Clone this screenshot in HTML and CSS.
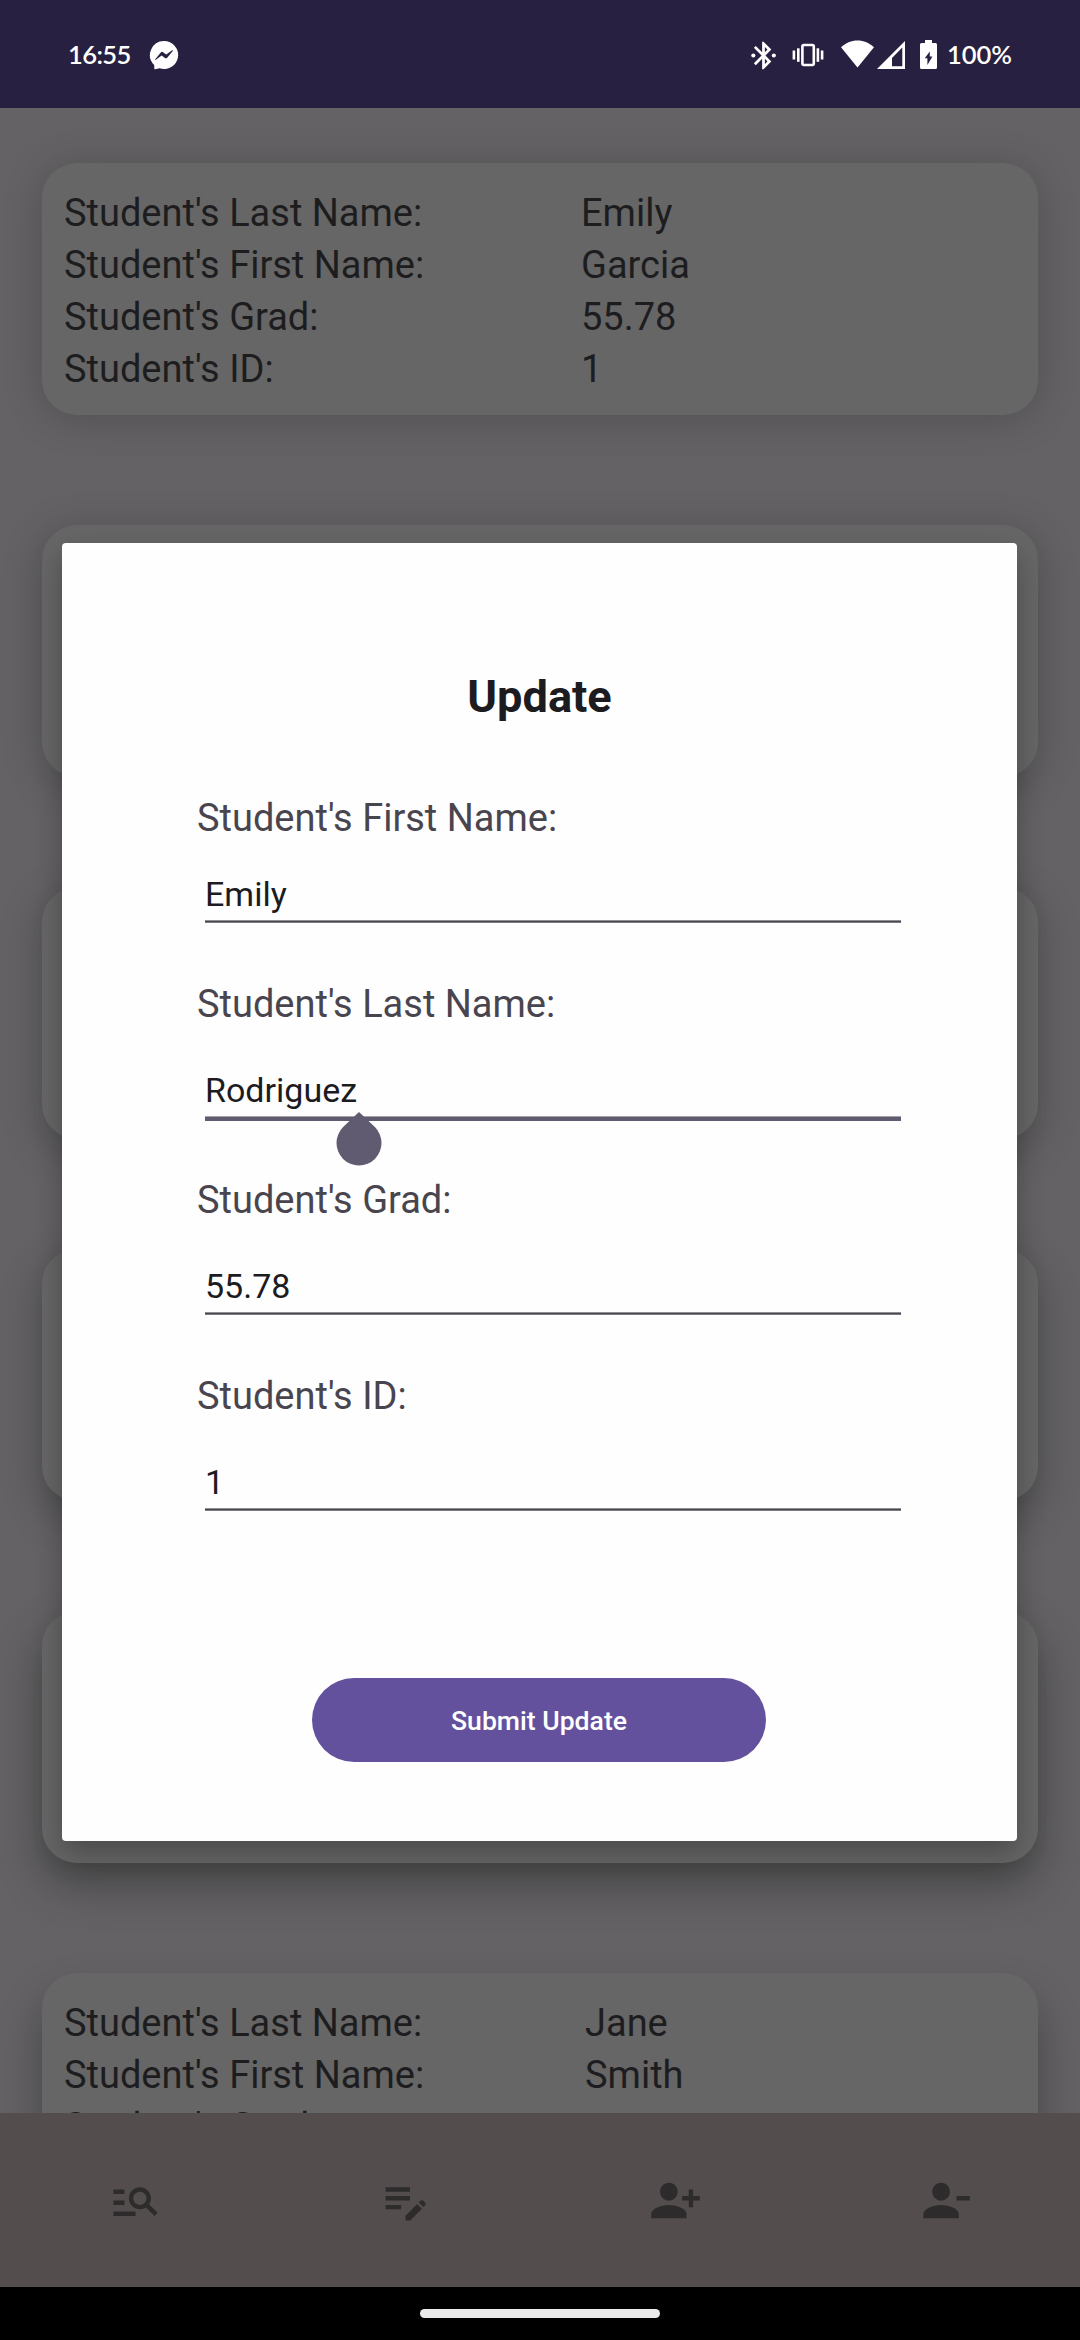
FILE: index.html
```html
<!DOCTYPE html>
<html lang="en">
<head>
<meta charset="utf-8">
<title>Update student</title>
<link rel="stylesheet" href="styles.css">
</head>
<body>
<div class="screen">
  <header class="status">
    <span class="clock">16:55</span>
    <svg class="messenger" width="30" height="30" viewBox="0 0 30 30"><path fill="#fff" d="M15 1a14 14 0 1 1-4.500 27.200L6.200 29.200a.8.8 0 0 1-.9-.8L5.200 25A14 14 0 0 1 15 1z"/><path fill="#282040" d="M6.200 19.200l5.400-6.500a2 2 0 0 1 2.800-.3l2.800 2.200 6-4.300c.5-.3.9.2.6.6l-5.400 6.500a2 2 0 0 1-2.800.3l-2.900-2.200-5.900 4.300c-.5.3-.9-.2-.6-.6z"/></svg>
    <svg class="bluetooth" width="33" height="33" viewBox="0 0 24 24" fill="#fff"><path d="M17.710 7.710L12 2h-1v7.590L6.410 5 5 6.410 10.590 12 5 17.590 6.410 19 11 14.410V22h1l5.710-5.710-4.300-4.290 4.300-4.290zM13 5.830l1.880 1.880L13 9.590V5.830zm1.880 10.460L13 18.170v-3.760l1.880 1.880z"/><circle cx="4.600" cy="12" r="1.500"/><circle cx="19.500" cy="12" r="1.500"/></svg>
    <svg class="vibrate" width="32" height="24" viewBox="0 0 32 24" fill="#fff"><rect x="10.400" y="2" width="11.400" height="20" rx="1.500" fill="none" stroke="#fff" stroke-width="2.600"/><rect x="5" y="5.300" width="2.600" height="13.500"/><rect x=".6" y="7.500" width="2.600" height="9"/><rect x="24.600" y="5.300" width="2.600" height="13.500"/><rect x="28.800" y="7.500" width="2.600" height="9"/></svg>
    <svg class="wifi" width="33" height="28" viewBox="0 0 33 28"><path fill="#fff" d="M0 7.300C4.600 2.800 10.300.4 16.500.4S28.400 2.800 33 7.300L16.500 27.500z"/></svg>
    <svg class="signal" width="28" height="28" viewBox="0 0 28 28"><path fill="#fff" fill-rule="evenodd" d="M28 0v28H0zM25.300 6.600L15 17v8.300h10.300z"/></svg>
    <svg class="battery" width="17" height="29" viewBox="0 0 17 29"><path fill="#fff" d="M5 0h7v3h3.500A1.500 1.500 0 0 1 17 4.500v23a1.500 1.500 0 0 1-1.500 1.500h-14A1.500 1.500 0 0 1 0 27.500v-23A1.500 1.500 0 0 1 1.500 3H5z"/><path fill="#282040" d="M9.800 11.500v5h2.600L7.400 25v-6.800H4.700z"/></svg>
    <span class="percent">100%</span>
  </header>

  <main class="list">
    <section class="card lift-1">
      <dl class="record">
        <dt>Student's Last Name:</dt><dd>Emily</dd>
        <dt>Student's First Name:</dt><dd>Garcia</dd>
        <dt>Student's Grad:</dt><dd>55.78</dd>
        <dt>Student's ID:</dt><dd>1</dd>
      </dl>
    </section>
    <section class="card lift-2"></section>
    <section class="card lift-3"></section>
    <section class="card lift-4"></section>
    <section class="card lift-5"></section>
    <section class="card lift-6">
      <dl class="record shifted">
        <dt>Student's Last Name:</dt><dd>Jane</dd>
        <dt>Student's First Name:</dt><dd>Smith</dd>
        <dt>Student's Grad:</dt><dd class="grade">77.48</dd>
      </dl>
    </section>
  </main>

  <nav class="tabs">
    <svg viewBox="0 0 24 24"><path d="M7 9H2V7h5v2zm0 3H2v2h5v-2zm13.590 7l-3.830-3.830c-.8.52-1.740.83-2.760.83-2.760 0-5-2.240-5-5s2.240-5 5-5 5 2.240 5 5c0 1.020-.31 1.960-.83 2.750L22 17.590 20.590 19zM17 11c0-1.650-1.350-3-3-3s-3 1.350-3 3 1.350 3 3 3 3-1.350 3-3zM2 19h10v-2H2v2z"/></svg>
    <svg viewBox="0 0 24 24"><path d="M3 10h11v2H3v-2zm0-2h11V6H3v2zm0 8h7v-2H3v2zm15.010-3.130l.71-.71c.39-.39 1.020-.39 1.410 0l.71.71c.39.39.39 1.020 0 1.410l-.71.71-2.120-2.120zm-.71.71l-5.300 5.300V21h2.120l5.300-5.300-2.120-2.120z"/></svg>
    <svg viewBox="0 0 24 24"><path d="M13 8c0-2.210-1.790-4-4-4S5 5.790 5 8s1.790 4 4 4 4-1.790 4-4zm2 2v2h3v3h2v-3h3v-2h-3V7h-2v3h-3zM1 18v2h16v-2c0-2.660-5.330-4-8-4s-8 1.340-8 4z"/></svg>
    <svg viewBox="0 0 24 24"><path d="M14 8c0-2.210-1.790-4-4-4S6 5.790 6 8s1.790 4 4 4 4-1.790 4-4zm3 2v2h6v-2h-6zM2 18v2h16v-2c0-2.660-5.330-4-8-4s-8 1.340-8 4z"/></svg>
  </nav>
  <footer class="gesture"><div class="handle"></div></footer>

  <div class="dialog">
    <h1 class="title">Update</h1>
    <form class="fields">
      <div class="field tight"><label>Student's First Name:</label><span class="value">Emily</span><div class="line"></div></div>
      <div class="field focused"><label>Student's Last Name:</label><span class="value">Rodriguez</span><div class="line"></div>
        <svg class="caret" width="46" height="54" viewBox="0 0 46 54"><path fill="#605b71" d="M23 0L38.900 15.100A22.500 22.500 0 1 1 7.100 15.100z"/></svg>
      </div>
      <div class="field"><label>Student's Grad:</label><span class="value">55.78</span><div class="line"></div></div>
      <div class="field"><label>Student's ID:</label><span class="value">1</span><div class="line"></div></div>
    </form>
    <button class="submit" type="button">Submit Update</button>
  </div>
</div>
</body>
</html>
```
FILE: styles.css
```css
* { box-sizing: border-box; }
body { margin: 0; font-family: Roboto, sans-serif; }

.screen {
  position: relative;
  display: flex;
  flex-direction: column;
  width: 1080px;
  height: 2340px;
  overflow: hidden;
  background: #656266;
}

/* Status bar */
.status {
  flex: none;
  display: flex;
  align-items: flex-start;
  height: 108px;
  padding: 40px 0 0 68px;
  background: #282040;
  color: #fff;
  font: 600 25.500px/30px Lato, sans-serif;
}
.status svg { flex: none; display: block; }
.clock { width: 81px; margin-top: -1px; letter-spacing: -.6px; }
.messenger { margin-top: 0; }
.bluetooth { margin: -1px 0 0 568px; }
.vibrate { margin: 3px 0 0 12px; }
.wifi { margin-left: 17px; }
.signal { margin: 1px 0 0 3px; }
.battery { margin-left: 15px; }
.percent { margin: -1px 0 0 10px; }

/* Student list */
.list {
  flex: none;
  display: flex;
  flex-direction: column;
  gap: 110px;
  height: 2005px;
  padding: 55px 42px 0;
  overflow: hidden;
}
.card {
  flex: none;
  height: 252px;
  padding: 24px 21px 24px 22px;
  border-radius: 35px;
  background: #666;
}
.lift-1 { box-shadow: 0 4px 40px rgba(6, 12, 4, .2); }
.lift-2 { box-shadow: 0 7px 40px rgba(6, 12, 4, .23); }
.lift-3 { box-shadow: 0 10px 40px rgba(6, 12, 4, .26); }
.lift-4 { box-shadow: 0 14px 40px rgba(6, 12, 4, .3); }
.lift-5 { box-shadow: 0 20px 44px rgba(6, 12, 4, .38); }
.lift-6 { box-shadow: 0 24px 40px rgba(6, 12, 4, .34); }
.record {
  display: grid;
  grid-template-columns: 517px 1fr;
  margin: 0;
  color: #1d1d1f;
  font-size: 38px;
  line-height: 52px;
}
.record.shifted { grid-template-columns: 521px 1fr; }
.record dd { margin: 0; }
.record .grade { padding-top: 1px; }

/* Bottom tabs */
.tabs {
  flex: none;
  display: grid;
  grid-template-columns: repeat(4, 1fr);
  place-items: center;
  height: 174px;
  background: #544d4d;
}
.tabs svg { width: 53px; height: 53px; fill: #2d2b2c; }
.gesture {
  display: flex;
  justify-content: center;
  height: 53px;
  padding-top: 22px;
  background: #000;
}
.handle { width: 240px; height: 9px; border-radius: 5px; background: #ebebeb; }

/* Dialog */
.dialog {
  position: absolute;
  left: 62px;
  top: 543px;
  width: 955px;
  height: 1298px;
  padding-top: 124px;
  border-radius: 4px;
  background: #fefefe;
  box-shadow: 0 12px 28px rgba(0, 0, 0, .28);
}
.title {
  margin: 0;
  color: #1c1b1f;
  font-size: 45.200px;
  font-weight: 700;
  line-height: 60px;
  text-align: center;
}
.fields {
  display: flex;
  flex-direction: column;
  gap: 53px;
  margin: 65px 116px 0 134px;
}
.field { position: relative; display: flex; flex-direction: column; }
.field label { padding-left: 1px; color: #49454f; font-size: 38px; line-height: 52px; }
.value {
  margin: 37px 0 3px 9px;
  color: #1c1b1f;
  font-size: 34px;
  line-height: 46px;
}
.tight .value { margin-top: 27px; }
.line {
  height: 5px;
  margin-left: 9px;
  background: linear-gradient(#918f95 1px, #49454f 1px 2px, #7d7a81 2px 3px, transparent 3px);
}
.focused .line { background: linear-gradient(#a5a2ae 1px, #605b71 1px); }
.caret { position: absolute; left: 139.500px; top: 134px; }
.submit {
  display: block;
  width: 454px;
  height: 84px;
  margin: 165px 0 0 250px;
  padding: 2px 0 0;
  border: 0;
  border-radius: 42px;
  background: #64519e;
  color: #fff;
  font: 500 26.600px/82px Roboto, sans-serif;
}
```
